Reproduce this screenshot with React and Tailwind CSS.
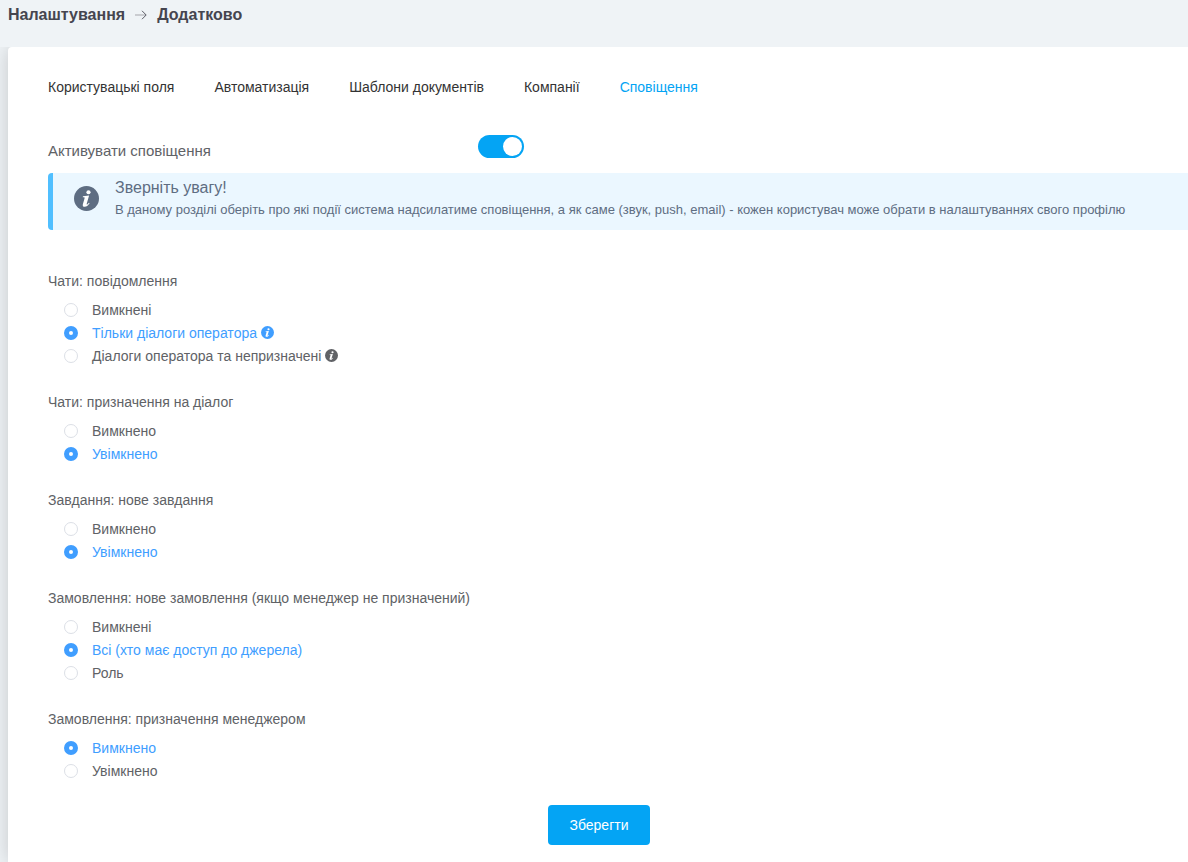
import { useState } from "react";

const tabs = ["Користувацькі поля", "Автоматизація", "Шаблони документів", "Компанії", "Сповіщення"];

const groups = [
  {
    id: "chat-messages",
    title: "Чати: повідомлення",
    selected: 1,
    options: [
      { label: "Вимкнені" },
      { label: "Тільки діалоги оператора", info: true },
      { label: "Діалоги оператора та непризначені", info: true },
    ],
  },
  {
    id: "chat-assign",
    title: "Чати: призначення на діалог",
    selected: 1,
    options: [{ label: "Вимкнено" }, { label: "Увімкнено" }],
  },
  {
    id: "task-new",
    title: "Завдання: нове завдання",
    selected: 1,
    options: [{ label: "Вимкнено" }, { label: "Увімкнено" }],
  },
  {
    id: "order-new",
    title: "Замовлення: нове замовлення (якщо менеджер не призначений)",
    selected: 1,
    options: [{ label: "Вимкнені" }, { label: "Всі (хто має доступ до джерела)" }, { label: "Роль" }],
  },
  {
    id: "order-assign",
    title: "Замовлення: призначення менеджером",
    selected: 0,
    options: [{ label: "Вимкнено" }, { label: "Увімкнено" }],
  },
];

function InfoIcon({ className }) {
  return (
    <svg viewBox="0 0 24 24" className={className} aria-hidden="true">
      <circle cx="12" cy="12" r="12" fill="currentColor" />
      <circle cx="13.9" cy="6" r="2" fill="#fff" />
      <path
        d="M8.6 9.8 L14.5 9.1 L12.2 17 C12 17.9 12.4 18 13 17.4 L14.3 16 L15 16.6 C13.4 18.9 12 20 10.3 20 C8.7 20 8.1 18.9 8.5 17.4 L10.1 11.9 C10.3 11 10.1 10.8 9.4 10.8 L8.4 10.8 Z"
        fill="#fff"
      />
    </svg>
  );
}

function RadioGroup({ group }) {
  const [selected, setSelected] = useState(group.selected);
  return (
    <fieldset>
      <legend className="mb-[7px] leading-5">{group.title}</legend>
      {group.options.map((option, index) => (
        <label
          key={option.label}
          className="flex h-[23px] w-fit cursor-pointer items-center pl-4 has-checked:text-[#409eff]"
        >
          <input
            type="radio"
            name={group.id}
            checked={selected === index}
            onChange={() => setSelected(index)}
            className="mr-3.5 size-3.5 appearance-none rounded-full border border-[#dcdfe6] bg-white checked:border-5 checked:border-[#409eff]"
          />
          {option.label}
          {option.info && <InfoIcon className="ml-1 size-3.25" />}
        </label>
      ))}
    </fieldset>
  );
}

export default function App() {
  const [enabled, setEnabled] = useState(true);
  return (
    <div className="flex min-h-screen flex-col bg-[#eff3f6] font-['Liberation_Sans',Arial,sans-serif] text-sm text-[#606266]">
      <header className="h-[47px] px-2 pt-[5px]">
        <nav className="flex items-center text-base leading-5 font-bold text-[#45454f]" aria-label="Розділ">
          <a href="#settings">Налаштування</a>
          <svg viewBox="0 0 12 10" className="mx-2.5 h-2.5 w-3 fill-none" aria-hidden="true">
            <path d="M0 5H11" stroke="#a5a5ab" />
            <path d="M7 0.8L11.2 5L7 9.2" stroke="#5c5c66" />
          </svg>
          <span>Додатково</span>
        </nav>
      </header>

      <div className="flex grow flex-col overflow-hidden pl-2">
        <main className="grow rounded-tl bg-white pb-4 pl-10 shadow-[0_0_20px_rgba(0,0,0,0.18)]">
          <nav className="flex gap-10 pt-[30px] leading-5 text-[#333]" aria-label="Додатково">
            {tabs.map((tab) => (
              <a
                key={tab}
                href="#tab"
                aria-current={tab === "Сповіщення" ? "page" : undefined}
                className="aria-[current]:text-[#04a4f4]"
              >
                {tab}
              </a>
            ))}
          </nav>

          <div className="mt-[38px] flex h-[23px]">
            <label htmlFor="notifications" className="w-[430px] pt-[7px] text-[15px] leading-[18px]">
              Активувати сповіщення
            </label>
            <input
              id="notifications"
              type="checkbox"
              role="switch"
              checked={enabled}
              onChange={() => setEnabled(!enabled)}
              className="flex h-[23px] w-[46px] cursor-pointer appearance-none items-center rounded-full bg-[#c0ccda] px-0.5 before:size-[19px] before:rounded-full before:bg-white checked:justify-end checked:bg-[#04a4f4]"
            />
          </div>

          <section className="mt-[15px] flex rounded-l border-l-5 border-[#50bfff] bg-[#ebf7ff] pt-1 pb-2.5 pl-[21px] text-[#5e6d82]">
            <InfoIcon className="mt-[9px] mr-4 size-[25px] shrink-0" />
            <div>
              <h2 className="text-base leading-[22px]">Зверніть увагу!</h2>
              <p className="text-[13px] leading-[21px]">
                В даному розділі оберіть про які події система надсилатиме сповіщення, а як саме (звук, push, email) -
                кожен користувач може обрати в налаштуваннях свого профілю
              </p>
            </div>
          </section>

          <form className="mt-[41px] pr-[38px]" onSubmit={(event) => event.preventDefault()}>
            <div className="flex flex-col gap-[25px]">
              {groups.map((group) => (
                <RadioGroup key={group.id} group={group} />
              ))}
            </div>
            <button
              type="submit"
              className="mx-auto mt-[23px] block h-10 w-[102px] cursor-pointer rounded bg-[#04a4f4] text-white"
            >
              Зберегти
            </button>
          </form>
        </main>
      </div>
    </div>
  );
}
